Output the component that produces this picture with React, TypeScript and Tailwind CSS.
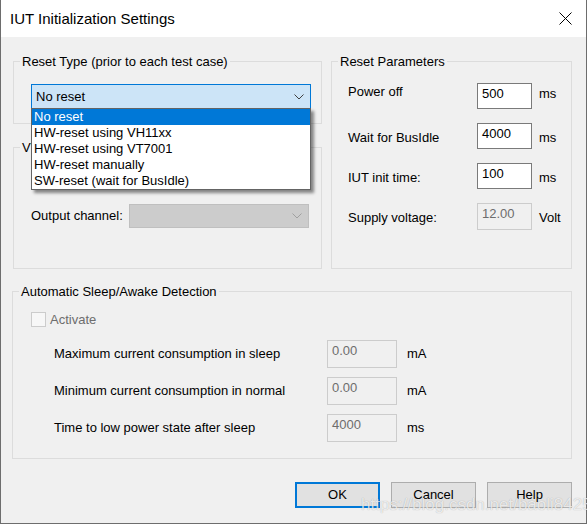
import type React from "react"

const Chevron = ({ color }: { color: string }) => (
  <svg width="10" height="6" viewBox="0 0 10 6" fill="none">
    <path d="M0.5 0.5 L5 5 L9.5 0.5" stroke={color} strokeWidth="1" />
  </svg>
)

const Group = ({
  title,
  className,
  children,
}: {
  title: string
  className?: string
  children?: React.ReactNode
}) => (
  <fieldset className={`border border-[#dcdcdc] min-w-0 ${className ?? ""}`}>
    <legend className="ml-[6px] px-[2px] text-[13px] leading-[15px] text-black">{title}</legend>
    {children}
  </fieldset>
)

const Field = ({ value, disabled, className }: { value: string; disabled?: boolean; className?: string }) => (
  <div
    className={`border pl-[4px] pt-[2px] text-[13px] leading-[16px] ${
      disabled ? "border-[#cccccc] bg-[#f0f0f0] text-[#6d6d6d]" : "border-[#7a7a7a] bg-white text-black"
    } ${className ?? ""}`}
  >
    {value}
  </div>
)

const resetOptions = [
  "No reset",
  "HW-reset using VH11xx",
  "HW-reset using VT7001",
  "HW-reset manually",
  "SW-reset (wait for BusIdle)",
]

export default function App() {
  return (
    <div className="relative w-[587px] h-[525px] bg-white font-['Liberation_Sans',Arial,sans-serif] text-black">
      <div className="w-[587px] h-[524px] border-x border-b border-[#6d6d6d] flex flex-col">
        {/* title bar */}
        <div className="h-[37px] bg-white flex items-center justify-between pl-[9px] pr-[14px] shrink-0">
          <span className="text-[15px] leading-[18px]">IUT Initialization Settings</span>
          <svg width="13" height="13" viewBox="0 0 13 13">
            <path d="M0.5 0.5 L12.5 12.5 M12.5 0.5 L0.5 12.5" stroke="#000" strokeWidth="1" />
          </svg>
        </div>

        {/* body */}
        <div className="flex-1 bg-[#f0f0f0] pl-[12px] pr-[14px] pt-[17px]">
          <div className="flex gap-[9px]">
            <div className="w-[309px] flex flex-col gap-[16px]">
              <Group title="Reset Type (prior to each test case)" className="w-[309px]">
                <div className="pt-[15px] pb-[14px] pl-[17px]">
                  <div className="relative w-[280px] h-[25px] border border-[#0078d7] bg-[#cce4f7] flex items-center justify-between pl-[4px] pr-[6px] text-[13px]">
                    <span>No reset</span>
                    <Chevron color="#404040" />
                    <div className="absolute left-[-1px] top-[23px] w-[280px] border border-[#646464] bg-white z-10 shadow-[3px_3px_3px_rgba(0,0,0,0.45)]">
                      {resetOptions.map((opt, i) => (
                        <div
                          key={opt}
                          className={`h-[16px] pl-[2px] text-[13px] leading-[16px] ${
                            i === 0 ? "bg-[#0078d7] text-white" : "text-black"
                          }`}
                        >
                          {opt}
                        </div>
                      ))}
                    </div>
                  </div>
                </div>
              </Group>

              <Group title="VT7001 Settings" className="w-[309px]">
                <div className="pt-[49px] pb-[40px] pl-[17px] flex items-center">
                  <span className="w-[98px] text-[13px]">Output channel:</span>
                  <div className="w-[180px] h-[24px] border border-[#bfbfbf] bg-[#cccccc] flex items-center justify-end pr-[6px]">
                    <Chevron color="#a0a0a0" />
                  </div>
                </div>
              </Group>
            </div>

            <Group title="Reset Parameters" className="w-[241px]">
              <div className="pt-[14px] pl-[16px] grid grid-cols-[129px_55px_auto] gap-y-[14px] items-center text-[13px]">
                <span className="-translate-y-[4px]">Power off</span>
                <Field value="500" className="h-[26px]" />
                <span className="pl-[7px] -translate-y-[2px]">ms</span>

                <span className="translate-y-[2px]">Wait for BusIdle</span>
                <Field value="4000" className="h-[26px]" />
                <span className="pl-[7px] translate-y-[2px]">ms</span>

                <span className="translate-y-[2px]">IUT init time:</span>
                <Field value="100" className="h-[26px]" />
                <span className="pl-[7px] translate-y-[2px]">ms</span>

                <span className="translate-y-[1px]">Supply voltage:</span>
                <Field value="12.00" disabled className="h-[27px]" />
                <span className="pl-[7px] translate-y-[1px]">Volt</span>
              </div>
            </Group>
          </div>

          <Group title="Automatic Sleep/Awake Detection" className="w-[560px] ml-[-1px] mt-[15px]">
            <div className="pt-[13px] pb-[16px] pl-[18px]">
              <div className="flex items-center gap-[4px] h-[15px]">
                <div className="w-[15px] h-[15px] border border-[#cccccc] bg-[#f7f7f7]" />
                <span className="text-[13px] text-[#6d6d6d]">Activate</span>
              </div>
              <div className="mt-[13px] pl-[23px] grid grid-cols-[273px_70px_auto] gap-y-[9px] items-center text-[13px]">
                <span>Maximum current consumption in sleep</span>
                <Field value="0.00" disabled className="h-[28px]" />
                <span className="pl-[10px]">mA</span>

                <span>Minimum current consumption in normal</span>
                <Field value="0.00" disabled className="h-[28px]" />
                <span className="pl-[10px]">mA</span>

                <span>Time to low power state after sleep</span>
                <Field value="4000" disabled className="h-[28px]" />
                <span className="pl-[10px]">ms</span>
              </div>
            </div>
          </Group>

          <div className="mt-[23px] flex justify-end gap-[11px] text-[13px]">
            <button className="w-[85px] h-[26px] border-2 border-[#0078d7] bg-[#e1e1e1]">OK</button>
            <button className="w-[85px] h-[26px] border border-[#adadad] bg-[#e1e1e1]">Cancel</button>
            <button className="w-[85px] h-[26px] border border-[#adadad] bg-[#e1e1e1]">Help</button>
          </div>
        </div>
      </div>

      <div className="absolute left-[361px] top-[495px] text-[17px] leading-[20px] text-white/75 [text-shadow:0_0_1px_rgba(0,0,0,0.3)] pointer-events-none">
        https://blog.csdn.net/baoli8425
      </div>
    </div>
  )
}
